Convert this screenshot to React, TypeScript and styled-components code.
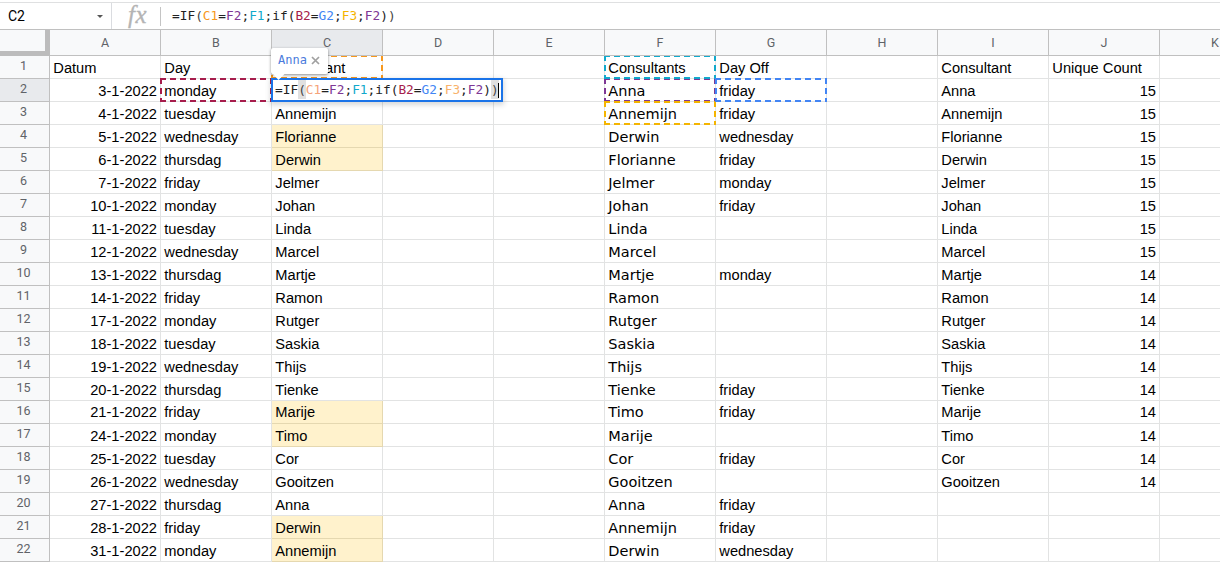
import React from 'react';
import styled, { createGlobalStyle } from 'styled-components';

const Global = createGlobalStyle`
  * { box-sizing: border-box; }
  body { margin: 0; background: #fff; overflow: hidden; }
`;

const sans = '"Liberation Sans", Arial, sans-serif';
const ui = 'Roboto, "Liberation Sans", sans-serif';
const mono = '"DejaVu Sans Mono", "Liberation Mono", monospace';
const humanist = '"DejaVu Sans", Verdana, sans-serif';

const Page = styled.div`
  width: 1220px;
  height: 562px;
  overflow: hidden;
  background: #fff;
  display: flex;
  flex-direction: column;
`;

const FormulaBar = styled.div`
  height: 30px;
  flex: none;
  display: flex;
  align-items: center;
  padding-top: 3px;
  border-bottom: 1px solid #c0c0c0;
  background: linear-gradient(#dfe0e1, #dfe0e1) 0 2px / 100% 1px no-repeat;
`;

const NameBox = styled.div`
  width: 112px;
  height: 26px;
  display: flex;
  align-items: center;
  justify-content: space-between;
  padding: 0 8px;
  border-right: 1px solid #dadce0;
  font: 14px/26px ${ui};
  color: #000;
`;

const Caret = styled.span`
  border: 3px solid transparent;
  border-top-color: #555;
  border-bottom: 0;
`;

const Fx = styled.div`
  width: 49px;
  height: 19px;
  padding-left: 16px;
  border-right: 1px solid #c4c4c4;
  font: italic 25px/15px "Liberation Serif", serif;
  letter-spacing: 0.5px;
  color: #b4b4b4;
  -webkit-text-stroke: 0.3px #b4b4b4;
`;

const Formula = styled.div`
  font: 12.8px/24px ${mono};
  color: #000;
  white-space: pre;
`;

const BarFormula = styled(Formula)`
  padding: 0 0 1px 11px;
`;

const Tok = styled.span<{ $c?: string; $mark?: boolean }>`
  color: ${p => p.$c ?? '#222'};
  ${p => p.$mark && 'background: #e0e0e0; padding: 2px 0;'}
`;

const Sheet = styled.div`
  display: grid;
  grid-template-columns: 50px repeat(11, 111px);
  grid-template-rows: 26px repeat(22, 23px);
`;

const Corner = styled.div`
  grid-area: 1 / 1;
  background: #f8f9fa;
  border-right: 5px solid #bcbcbc;
  border-bottom: 5px solid #bcbcbc;
`;

const ColHead = styled.div<{ $on?: boolean }>`
  position: relative;
  z-index: 2;
  background: ${p => (p.$on ? '#e8eaed' : '#f8f9fa')};
  border-right: 1px solid #c0c0c0;
  border-bottom: 1px solid #c0c0c0;
  font: 12.5px/26px ${ui};
  color: #5f6368;
  text-align: center;
`;

const RowHead = styled.div<{ $on?: boolean }>`
  background: ${p => (p.$on ? '#e8eaed' : '#f8f9fa')};
  border-right: 1px solid #c0c0c0;
  border-bottom: 1px solid #c0c0c0;
  font: 12.5px/20px ${ui};
  color: #5f6368;
  text-align: center;
  padding-right: 2px;
`;

const Cell = styled.div<{ $right?: boolean; $hi?: boolean; $human?: boolean; $raised?: boolean }>`
  background: ${p => (p.$hi ? '#fff2cc' : '#fff')};
  border-right: 1px solid ${p => (p.$hi ? '#e5d8b0' : '#e2e3e3')};
  border-bottom: 1px solid ${p => (p.$hi ? '#e5d8b0' : '#e2e3e3')};
  font-family: ${p => (p.$human ? humanist : sans)};
  font-size: ${p => (p.$human ? '14.5px' : '14.67px')};
  line-height: ${p => (p.$raised ? '22px' : '24px')};
  height: 23px;
  padding: 0 3px 0 3.3px;
  text-align: ${p => (p.$right ? 'right' : 'left')};
  white-space: nowrap;
  color: #000;
`;

const Range = styled.div<{ $c: string; $col: number; $row: number }>`
  grid-area: ${p => p.$row + 1} / ${p => p.$col + 1};
  margin: -1px 0 0 -1px;
  z-index: 1;
  --h: repeating-linear-gradient(90deg, ${p => p.$c} 0 6px, transparent 6px 10px);
  --v: repeating-linear-gradient(180deg, ${p => p.$c} 0 6px, transparent 6px 10px);
  background:
    var(--h) 0 0 / 100% 2px no-repeat,
    var(--h) 0 100% / 100% 2px no-repeat,
    var(--v) 0 0 / 2px 100% no-repeat,
    var(--v) 100% 0 / 2px 100% no-repeat;
`;

const Editor = styled.div`
  grid-area: 3 / 4;
  width: 232px;
  height: 24px;
  margin: -1px 0 0 -1px;
  border: 2px solid #1a73e8;
  background: #fff;
  box-shadow: 0 2px 5px 1px rgba(60, 64, 67, 0.2);
  padding-left: 2px;
  z-index: 3;
  position: relative;
  display: flex;
  align-items: center;
`;

const TextCursor = styled.span`
  width: 1px;
  height: 15px;
  margin-left: -1px;
  background: #000;
`;

const Preview = styled.div`
  position: absolute;
  left: -2px;
  top: -32px;
  width: 57px;
  height: 26px;
  display: flex;
  align-items: center;
  gap: 4px;
  padding: 0 0 2px 7px;
  background: #fff;
  border-radius: 2px;
  box-shadow: 0 1px 3px rgba(0, 0, 0, 0.45);
  font: 12px/20px ${mono};
  color: #4a7bdc;
`;

const Pointer = styled.svg`
  position: absolute;
  left: 1px;
  top: 25px;
`;

type Part = [string, string?, boolean?];
const formula: Part[] = [
  ['='], ['IF'], ['(', '#444', true], ['C1', '#f7981d'], ['='], ['F2', '#7e3794'], [';'],
  ['F1', '#11a9cc'], [';'], ['if('], ['B2', '#a61d4c'], ['='], ['G2', '#4285f4'], [';'],
  ['F3', '#f4b400'], [';'], ['F2', '#7e3794'], [')'], [')', '#444', true],
];

// The in-cell editor uses softer tones for the two warm references.
const editorTone: Record<string, string> = { C1: '#f5a37a', F3: '#f8b26a' };

const Tokens = ({ editing }: { editing?: boolean }) => (
  <>
    {formula.map(([t, c, m], i) => (
      <Tok key={i} $c={editing ? editorTone[t] ?? c : c} $mark={editing && m}>{t}</Tok>
    ))}
  </>
);

const letters = 'ABCDEFGHIJK'.split('');
const dates = ['Datum', '3-1-2022', '4-1-2022', '5-1-2022', '6-1-2022', '7-1-2022', '10-1-2022', '11-1-2022', '12-1-2022', '13-1-2022', '14-1-2022', '17-1-2022', '18-1-2022', '19-1-2022', '20-1-2022', '21-1-2022', '24-1-2022', '25-1-2022', '26-1-2022', '27-1-2022', '28-1-2022', '31-1-2022'];
const week = ['monday', 'tuesday', 'wednesday', 'thursdag', 'friday'];
const people = ['Anna', 'Annemijn', 'Florianne', 'Derwin', 'Jelmer', 'Johan', 'Linda', 'Marcel', 'Martje', 'Ramon', 'Rutger', 'Saskia', 'Thijs', 'Tienke', 'Marije', 'Timo', 'Cor', 'Gooitzen'];
const team = ['Consultants', 'Anna', 'Annemijn', 'Derwin', 'Florianne', 'Jelmer', 'Johan', 'Linda', 'Marcel', 'Martje', 'Ramon', 'Rutger', 'Saskia', 'Thijs', 'Tienke', 'Timo', 'Marije', 'Cor', 'Gooitzen', 'Anna', 'Annemijn', 'Derwin'];
const off = ['Day Off', 'friday', 'friday', 'wednesday', 'friday', 'monday', 'friday', '', '', 'monday', '', '', '', '', 'friday', 'friday', '', 'friday', '', 'friday', 'friday', 'wednesday'];
// C2 is being edited, so its own value is covered by the editor.
const planned = ['Consultant', '', ...people.slice(1), 'Anna', 'Derwin', 'Annemijn'];
const highlighted = [4, 5, 16, 17, 21, 22];

const valueAt = (col: number, row: number): string => {
  const i = row - 1;
  switch (letters[col]) {
    case 'A': return dates[i];
    case 'B': return i === 0 ? 'Day' : week[(i - 1) % 5];
    case 'C': return planned[i];
    case 'F': return team[i];
    case 'G': return off[i];
    case 'I': return i === 0 ? 'Consultant' : people[i - 1] ?? '';
    case 'J': return i === 0 ? 'Unique Count' : i > 18 ? '' : i < 9 ? '15' : '14';
    default: return '';
  }
};

export default function App() {
  return (
    <Page>
      <Global />
      <FormulaBar>
        <NameBox>C2<Caret /></NameBox>
        <Fx>fx</Fx>
        <BarFormula><Tokens /></BarFormula>
      </FormulaBar>
      <Sheet>
        <Corner />
        {letters.map((l, c) => (
          <ColHead key={l} $on={l === 'C'} style={{ gridArea: `1 / ${c + 2}` }}>{l}</ColHead>
        ))}
        {dates.map((_, i) => (
          <React.Fragment key={i}>
            <RowHead $on={i === 1} style={{ gridArea: `${i + 2} / 1` }}>{i + 1}</RowHead>
            {letters.map((l, c) => (
              <Cell
                key={l}
                style={{ gridArea: `${i + 2} / ${c + 2}` }}
                $right={i > 0 && (l === 'A' || l === 'J')}
                $hi={l === 'C' && highlighted.includes(i + 1)}
                $human={l === 'F' && i > 0}
                $raised={i === 15}
              >
                {valueAt(c, i + 1)}
              </Cell>
            ))}
          </React.Fragment>
        ))}
        <Range $c="#f7981d" $col={3} $row={1} />
        <Range $c="#a61d4c" $col={2} $row={2} />
        <Range $c="#7e3794" $col={6} $row={2} />
        <Range $c="#11a9cc" $col={6} $row={1} />
        <Range $c="#f4b400" $col={6} $row={3} />
        <Range $c="#4285f4" $col={7} $row={2} />
        <Editor>
          <Formula><Tokens editing /></Formula>
          <TextCursor />
          <Preview>
            Anna
            <svg width="9" height="9" viewBox="0 0 9 9"><path d="M1 1l7 7M8 1l-7 7" stroke="#a0a0a0" strokeWidth="1.7" /></svg>
            <Pointer width="14" height="8" viewBox="0 0 14 8">
              <path d="M0 0L6.5 7L13.5 0" fill="#fff" />
            </Pointer>
          </Preview>
        </Editor>
      </Sheet>
    </Page>
  );
}
